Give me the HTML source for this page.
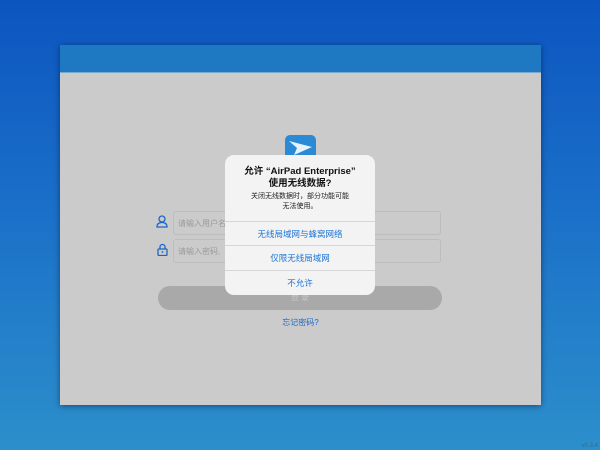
<!DOCTYPE html><html><head><meta charset="utf-8"><style>
body{margin:0;width:600px;height:450px;overflow:hidden;background:linear-gradient(#0c55c0 0%,#1a6fc8 45%,#2c8fcb 100%);font-family:"Liberation Sans","Noto Sans CJK SC",sans-serif;position:relative}
.frame{position:absolute;left:60px;top:45px;width:481px;height:360px;background:#cbcbcb;box-shadow:0 1px 6px rgba(0,0,30,.45)}
.hdr{position:absolute;left:0;top:0;width:100%;height:27px;background:#1f78c2;border-bottom:1px solid #7aa9d0}
.inp{position:absolute;left:113px;width:268px;height:24px;border:1px solid #bdbdbd;border-radius:3px;font-size:8px;color:#9a9a9a;line-height:24px;padding-left:4px;box-sizing:border-box}
.btn{position:absolute;left:98px;top:241px;width:284px;height:24px;border-radius:12px;background:#a9a9a9;text-align:center;font-size:8px;color:#c8c8c8;line-height:24px}
.dlg{position:absolute;left:225px;top:155px;width:150px;height:140px;background:#f3f3f3;border-radius:9px;text-align:center;overflow:hidden}
.t{font-size:9.5px;font-weight:bold;color:#111;line-height:12px;margin-top:11px}
.s{font-size:7px;color:#222;line-height:9.5px;margin-top:2px}
.o{position:absolute;left:0;width:100%;border-top:1px solid #d6d6d6;font-size:8.5px;color:#1a73d6;line-height:24px}
</style></head><body>
<div class="frame"><div class="hdr"></div>
<svg style="position:absolute;left:225px;top:90px" width="31" height="26"><rect width="31" height="26" rx="5" fill="#2a8ad6"/><path d="M4 6 L27 12 L9 20 L12 13Z" fill="#e8f2fb"/></svg>
<svg style="position:absolute;left:96px;top:170px" width="12" height="13"><circle cx="6" cy="4" r="3" fill="none" stroke="#1a66c8" stroke-width="1.3"/><path d="M1 12 Q1 7.5 6 7.5 Q11 7.5 11 12Z" fill="none" stroke="#1a66c8" stroke-width="1.3"/></svg>
<svg style="position:absolute;left:97px;top:198px" width="11" height="13"><path d="M3 6V4a2.5 2.5 0 0 1 5 0v2" fill="none" stroke="#1a66c8" stroke-width="1.3"/><rect x="1" y="6" width="9" height="6.5" rx="1" fill="none" stroke="#1a66c8" stroke-width="1.3"/><circle cx="5.5" cy="9" r=".9" fill="#1a66c8"/></svg>
<div class="inp" style="top:166px">请输入用户名</div>
<div class="inp" style="top:194px">请输入密码,</div>
<div class="btn">登 录</div>
<div style="position:absolute;left:0;width:100%;top:272px;text-align:center;font-size:8px;color:#1a66c8">忘记密码?</div>
</div>
<div class="dlg">
<div class="t">允许 “AirPad Enterprise”<br>使用无线数据?</div>
<div class="s">关闭无线数据时，部分功能可能<br>无法使用。</div>
<div class="o" style="top:66px">无线局域网与蜂窝网络</div>
<div class="o" style="top:90px">仅限无线局域网</div>
<div class="o" style="top:115px">不允许</div>
</div>
<div style="position:absolute;right:2px;bottom:1px;font-size:6px;color:#2b6f9a">v0.3.4</div>
</body></html>
